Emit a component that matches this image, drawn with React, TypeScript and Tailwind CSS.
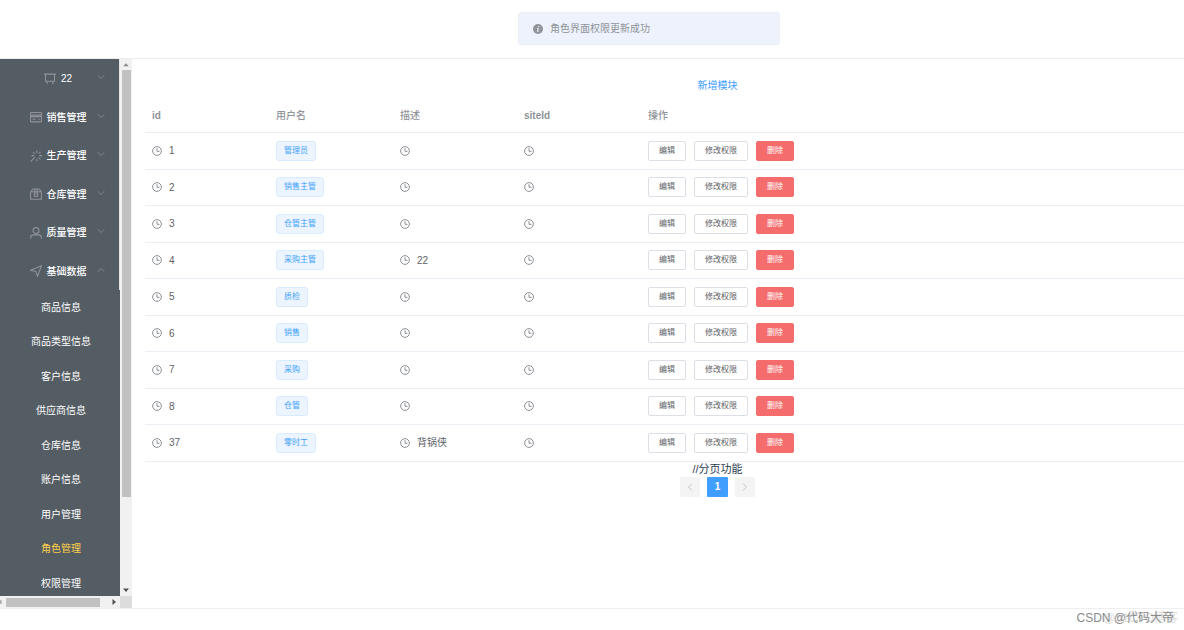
import React from 'react';
import { ChevronDown, ChevronLeft, ChevronRight, ChevronUp } from 'lucide-react';

interface MenuGroup {
  label: string;
  icon: React.ReactNode;
  open?: boolean;
}

interface Role {
  id: number;
  name: string;
  description?: string;
}

const menuGroups: MenuGroup[] = [
  {
    label: '22',
    icon: <path d="M0 1.500h16M2 1.500v9.500h12V1.500M4.500 11L4 15M11.500 11L12 15" />,
  },
  {
    label: '销售管理',
    icon: (
      <>
        <rect x="0.7" y="2" width="14.6" height="12.5" rx="1" />
        <path d="M1 5.500h14M1 7.500h14M3.500 11h4M11 11h2" />
      </>
    ),
  },
  {
    label: '生产管理',
    icon: (
      <path d="M9 .5v3.500M9 11.500V15M2 7.500h3.500M12.500 7.500H16M4 2.800l2.200 2.200M14 2.500L11.500 5M11.500 10l2.500 2.500M6.500 9.500L1 15.500" />
    ),
  },
  {
    label: '仓库管理',
    icon: <path d="M.8 5L4 1.200h8L15.200 5v10H.8zM.8 5h14.400M5.800 5v6h4.400V5M5.800 5L7 1.200M10.200 5L9 1.200M8 5v3.500" />,
  },
  {
    label: '质量管理',
    icon: (
      <>
        <circle cx="8" cy="4.800" r="4" />
        <path d="M1 15.500v-2c0-2 1.500-3 3.500-3h7c2 0 3.500 1 3.500 3v2" />
      </>
    ),
  },
  {
    label: '基础数据',
    icon: <path d="M.8 7L15.200 1 10 15.200 7.800 8.500z" />,
    open: true,
  },
];

const subItems = [
  '商品信息',
  '商品类型信息',
  '客户信息',
  '供应商信息',
  '仓库信息',
  '账户信息',
  '用户管理',
  '角色管理',
  '权限管理',
];

const activeItem = '角色管理';

const roles: Role[] = [
  { id: 1, name: '管理员' },
  { id: 2, name: '销售主管' },
  { id: 3, name: '仓管主管' },
  { id: 4, name: '采购主管', description: '22' },
  { id: 5, name: '质检' },
  { id: 6, name: '销售' },
  { id: 7, name: '采购' },
  { id: 8, name: '仓管' },
  { id: 37, name: '零时工', description: '背锅侠' },
];

const TimeCell: React.FC<{ children?: React.ReactNode }> = ({ children }) => (
  <div className="flex items-center gap-[7px]">
    <svg viewBox="0 0 16 16" className="h-[10px] w-[10px] fill-none stroke-[#7d8086]" strokeWidth="1.4">
      <circle cx="8" cy="8" r="7" />
      <path d="M8 3.500V8.500h4" />
    </svg>
    <span>{children}</span>
  </div>
);

const Sidebar: React.FC = () => (
  <aside className="flex w-[132px] shrink-0 flex-col">
    <div className="flex min-h-0 flex-1">
      <nav className="min-w-0 flex-1 overflow-hidden bg-[#545c64] text-[10px] text-white">
        <div className="border-r border-[#e6e6e6]">
          {menuGroups.map((group) => (
            <button
              key={group.label}
              type="button"
              className="relative flex w-full items-center justify-center gap-[5px] pr-[3px] font-medium odd:h-[39px] even:h-[38px]"
            >
              <svg viewBox="0 0 16 16" className="h-[12px] w-[12px] fill-none stroke-[#909399]" strokeWidth="1.4">
                {group.icon}
              </svg>
              <span>{group.label}</span>
              {group.open ? (
                <ChevronUp size={12} strokeWidth={1.5} className="absolute right-[12px] mb-[3px] text-[#909399]" />
              ) : (
                <ChevronDown size={12} strokeWidth={1.5} className="absolute right-[12px] mb-[3px] text-[#909399]" />
              )}
            </button>
          ))}
        </div>
        <div>
          {subItems.map((item) => (
            <a
              key={item}
              href="#"
              className={`flex items-center justify-center pl-[2px] odd:h-[34px] even:h-[35px] ${
                item === activeItem ? 'text-[#ffd04b]' : ''
              }`}
            >
              {item}
            </a>
          ))}
        </div>
      </nav>

      {/* Vertical scrollbar */}
      <div className="flex w-[12px] flex-col items-center bg-[#f1f1f1]">
        <svg viewBox="0 0 12 12" className="h-[11px] w-[12px] fill-[#8a8a8a]">
          <path d="M3 8l3-3.500L9 8z" />
        </svg>
        <div className="w-[9px] flex-1">
          <div className="h-[83%] bg-[#c1c1c1]" />
        </div>
        <svg viewBox="0 0 12 12" className="h-[12px] w-[12px] fill-[#505050]">
          <path d="M3 4.500L6 8l3-3.500z" />
        </svg>
      </div>
    </div>

    {/* Horizontal scrollbar */}
    <div className="flex h-[12px] overflow-hidden">
      <div className="-ml-[6px] flex flex-1 items-center bg-[#f1f1f1]">
        <svg viewBox="0 0 12 12" className="h-[12px] w-[12px] fill-[#a3a3a3]">
          <path d="M7.500 3.500L4.500 6l3 2.500z" />
        </svg>
        <div className="h-[9px] flex-1">
          <div className="h-full w-[92%] bg-[#c1c1c1]" />
        </div>
        <svg viewBox="0 0 12 12" className="h-[12px] w-[12px] fill-[#505050]">
          <path d="M4.500 3L8 6l-3.500 3z" />
        </svg>
      </div>
      <div className="w-[12px] bg-[#dcdcdc]" />
    </div>
  </aside>
);

const RoleTable: React.FC = () => (
  <table className="w-full table-fixed border-collapse text-left text-[10px] text-[#606266]">
    <colgroup>
      <col className="w-[124px]" />
      <col className="w-[124px]" />
      <col className="w-[124px]" />
      <col className="w-[124px]" />
      <col />
    </colgroup>
    <thead className="text-[#909399]">
      <tr className="h-[33px] border-b border-[#ebeef5]">
        <th className="px-[7px] font-bold">id</th>
        <th className="px-[7px] font-medium">用户名</th>
        <th className="px-[7px] font-medium">描述</th>
        <th className="px-[7px] font-bold">siteId</th>
        <th className="px-[7px] font-medium">操作</th>
      </tr>
    </thead>
    <tbody>
      {roles.map((role) => (
        <tr key={role.id} className="border-b border-[#ebeef5] odd:h-[37px] even:h-[36px]">
          <td className="px-[7px]">
            <TimeCell>{role.id}</TimeCell>
          </td>
          <td className="px-[7px]">
            <span className="flex h-[20px] w-fit items-center rounded-[3px] border border-[#d9ecff] bg-[#ecf5ff] px-[7px] text-[8px] text-[#409eff]">
              {role.name}
            </span>
          </td>
          <td className="px-[7px]">
            <TimeCell>{role.description}</TimeCell>
          </td>
          <td className="px-[7px]">
            <TimeCell />
          </td>
          <td className="px-[7px]">
            <div className="flex gap-[8px] text-[8px]">
              <button type="button" className="h-[20px] rounded-[2px] border border-[#dcdfe6] px-[10px]">
                编辑
              </button>
              <button type="button" className="h-[20px] rounded-[2px] border border-[#dcdfe6] px-[10px]">
                修改权限
              </button>
              <button type="button" className="h-[20px] rounded-[2px] border border-[#f56c6c] bg-[#f56c6c] px-[10px] text-white">
                删除
              </button>
            </div>
          </td>
        </tr>
      ))}
    </tbody>
  </table>
);

const Pagination: React.FC = () => (
  <div className="flex flex-col items-center text-[#2c3e50]">
    <p className="text-[11px] leading-[15px]">//分页功能</p>
    <div className="flex gap-[7px] text-[10px] font-bold">
      <button
        type="button"
        aria-label="上一页"
        disabled
        className="flex h-[20px] w-[20px] items-center justify-center rounded-[1px] bg-[#f4f4f5] text-[#c0c4cc]"
      >
        <ChevronLeft size={12} />
      </button>
      <button type="button" className="h-[20px] w-[21px] rounded-[1px] bg-[#409eff] text-white">
        1
      </button>
      <button
        type="button"
        aria-label="下一页"
        disabled
        className="flex h-[20px] w-[20px] items-center justify-center rounded-[1px] bg-[#f4f4f5] text-[#c0c4cc]"
      >
        <ChevronRight size={12} />
      </button>
    </div>
  </div>
);

export default function App() {
  return (
    <div className="relative h-screen overflow-hidden bg-white font-['Liberation_Sans','Noto_Sans_CJK_SC',sans-serif]">
      <div className="relative flex h-full min-w-[1298px] flex-col">
        <header className="h-[59px] shrink-0 border-b border-[#eeeeee]" />

        <div className="flex min-h-0 flex-1">
          <Sidebar />
          <main className="min-w-0 flex-1 pt-[20px] pr-[8px] pl-[13px]">
            <div className="flex h-[20px] justify-center">
              <button type="button" className="h-[14px] text-[10px] leading-[14px] text-[#409eff]">
                新增模块
              </button>
            </div>
            <RoleTable />
            <Pagination />
          </main>
        </div>

        <footer className="h-[22px] shrink-0 border-t border-[#eeeeee]" />

        {/* Message */}
        <div
          role="status"
          className="absolute top-[12px] left-1/2 flex h-[33px] w-[262px] -translate-x-1/2 items-center gap-[7px] rounded-[3px] border border-[#ebeef5] bg-[#edf2fc] px-[14px] text-[10px] text-[#909399]"
        >
          <svg viewBox="0 0 16 16" className="h-[10px] w-[10px]">
            <circle cx="8" cy="8" r="8" className="fill-[#909399]" />
            <path d="M9.200 3.200v1.800M6.800 7h1.600l-1 5h1.400" className="fill-none stroke-white" strokeWidth="1.6" />
          </svg>
          <p>角色界面权限更新成功</p>
        </div>
      </div>

      {/* Watermarks */}
      <span className="absolute right-[6px] bottom-[4px] text-[12px] leading-[16px] text-[#dddddd]">@51CTO博客</span>
      <span className="absolute right-[10px] bottom-[4px] text-[12px] leading-[16px] text-[#8a8a8a]">CSDN @代码大帝</span>
    </div>
  );
}
